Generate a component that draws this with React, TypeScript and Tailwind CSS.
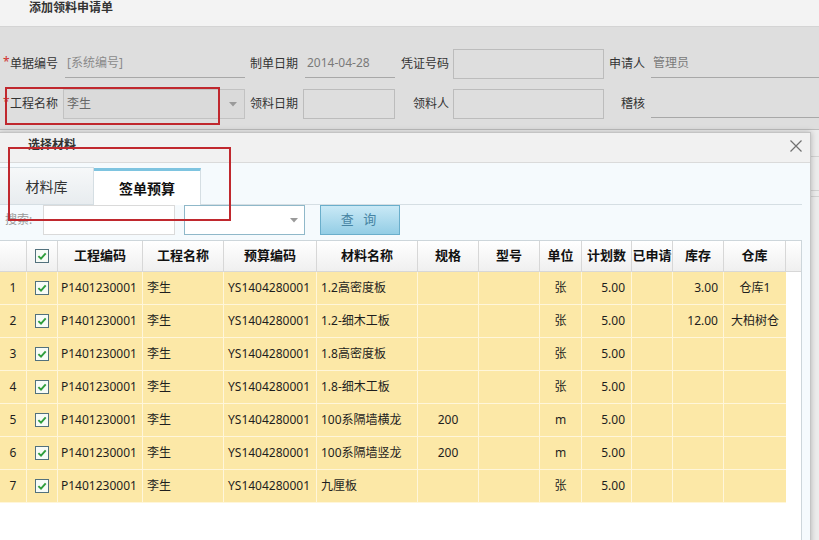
import React from "react";

type Row = { name: string; spec: string; unit: string; stock: string; wh: string };

const rows: Row[] = [
  { name: "1.2高密度板", spec: "", unit: "张", stock: "3.00", wh: "仓库1" },
  { name: "1.2-细木工板", spec: "", unit: "张", stock: "12.00", wh: "大柏树仓" },
  { name: "1.8高密度板", spec: "", unit: "张", stock: "", wh: "" },
  { name: "1.8-细木工板", spec: "", unit: "张", stock: "", wh: "" },
  { name: "100系隔墙横龙", spec: "200", unit: "m", stock: "", wh: "" },
  { name: "100系隔墙竖龙", spec: "200", unit: "m", stock: "", wh: "" },
  { name: "九厘板", spec: "", unit: "张", stock: "", wh: "" },
];

const cols =
  "grid grid-cols-[27px_31px_85px_81px_93px_101px_61px_61px_42px_50px_41px_51px_62px_15px]";

function Caret() {
  return (
    <svg width="8" height="5" viewBox="0 0 8 5">
      <path d="M0 0h8L4 4.5z" fill="#9a9a9a" />
    </svg>
  );
}

function CheckBox() {
  return (
    <svg width="14" height="14" viewBox="0 0 14 14">
      <rect x="0.5" y="0.5" width="13" height="13" fill="#f7fbf7" stroke="#52717d" />
      <path d="M3.4 7.1 6 9.7 10.7 4.3" fill="none" stroke="#2f9e3c" strokeWidth="1.9" />
    </svg>
  );
}

function Label({ className, star, children }: { className: string; star?: boolean; children: React.ReactNode }) {
  return (
    <div className={`flex items-center ${star ? "justify-between" : "justify-end"} ${className}`}>
      {star && <span className="pl-[3px] -mt-[4px] text-[12px] text-[#d0312d]">*</span>}
      <span>{children}</span>
    </div>
  );
}

export default function App() {
  return (
    <div className="relative w-[819px] h-[540px] overflow-hidden bg-[#ececec] font-['Noto_Sans','Noto_Sans_CJK_SC',sans-serif] text-[12px] text-[#333]">
      {/* page header */}
      <div className="h-[27px] bg-[#f3f3f3] border-b border-[#d4d4d4] pl-[29px] leading-[16px] font-bold text-[#333]">
        添加领料申请单
      </div>

      {/* form */}
      <div className="h-[103px] bg-[#dedede] border-b border-[#bdbdbd] pt-[22px] flex flex-col gap-[10px]">
        <div className="flex h-[30px]">
          <Label className="w-[58px]" star>单据编号</Label>
          <div className="ml-[7px] w-[180px] h-[29px] border-b border-[#a8a8a8] pl-[2px] pb-[1px] flex items-center text-[#8a8a8a]">
            [系统编号]
          </div>
          <Label className="w-[53px]">制单日期</Label>
          <div className="ml-[7px] w-[90px] h-[29px] border-b border-[#a8a8a8] pl-[2px] pb-[1px] flex items-center text-[#7a7a7a]">
            2014-04-28
          </div>
          <Label className="w-[54px]">凭证号码</Label>
          <div className="ml-[4px] w-[151px] border border-[#bcbcbc]" />
          <Label className="w-[41px]">申请人</Label>
          <div className="ml-[6px] flex-1 h-[29px] border-b border-[#a8a8a8] pl-[2px] pb-[1px] flex items-center text-[#7a7a7a]">
            管理员
          </div>
        </div>
        <div className="flex h-[30px]">
          <Label className="w-[58px]" star>工程名称</Label>
          <div className="ml-[5px] w-[182px] border border-[#c2c2c2] bg-[#dadada] pl-[3px] pr-[7px] flex items-center justify-between text-[#666]">
            <span>李生</span>
            <Caret />
          </div>
          <Label className="w-[53px]">领料日期</Label>
          <div className="ml-[5px] w-[92px] border border-[#bcbcbc]" />
          <Label className="w-[54px]">领料人</Label>
          <div className="ml-[4px] w-[151px] border border-[#bcbcbc]" />
          <Label className="w-[41px]">稽核</Label>
          <div className="ml-[6px] flex-1 h-[29px] border-b border-[#a8a8a8]" />
        </div>
      </div>

      {/* page lines behind the dialog */}
      <div className="h-[27px] border-b border-[#d2d2d2]" />
      <div className="h-[34px] border-b border-[#d2d2d2]" />
      <div className="h-[6px] border-b border-[#d2d2d2]" />

      {/* dialog */}
      <div className="absolute left-[-1px] top-[132px] w-[812px] h-[420px] border border-[#c4c4c4] bg-white shadow-[0_0_6px_rgba(0,0,0,0.25)] flex flex-col">
        <div className="h-[30px] shrink-0 bg-[#f1f1f1] border-b border-[#dadada] pl-[28px] pr-[8px] pb-[5px] flex items-center justify-between">
          <span className="font-bold text-[#333]">选择材料</span>
          <svg width="12" height="12" viewBox="0 0 12 12" className="mt-[2px]">
            <path d="M0.5 0.5 11.5 11.5M11.5 0.5 0.5 11.5" stroke="#707070" strokeWidth="1.2" />
          </svg>
        </div>

        <div className="flex-1 bg-[#f5fafd] pt-[5px] pr-[8px] flex flex-col">
          {/* tabs */}
          <div className="h-[37px] shrink-0 flex items-end border-b border-[#d5dee3] text-[14px]">
            <div className="w-[94px] h-[37px] bg-linear-to-b from-[#f6f8f9] to-[#e8ecef] border-t border-r border-[#d5dee3] flex items-center justify-center text-[#333]">
              材料库
            </div>
            <div className="w-[107px] h-[37px] -mb-px bg-white border-t-[3px] border-t-[#7ec4e0] border-r border-[#d5dee3] flex items-center justify-center font-bold text-[#111]">
              签单预算
            </div>
          </div>

          {/* search */}
          <div className="h-[30px] shrink-0 flex">
            <span className="w-[43px] pl-[5px] flex items-center text-[#9a9a9a]">搜索:</span>
            <div className="w-[132px] bg-white border border-[#dadada]" />
            <div className="ml-[9px] w-[121px] bg-white border border-[#8fb8c9] pr-[6px] flex items-center justify-end">
              <Caret />
            </div>
            <button className="ml-[15px] w-[80px] bg-linear-to-b from-[#c9e9f6] to-[#93cde5] border border-[#6aaecb] text-[13px] text-[#4784a3] tracking-[3px]">
              查 询
            </button>
          </div>

          {/* grid */}
          <div className="mt-[5px] flex-1 bg-white border-t border-r border-[#cdd6db]">
            <div className={`${cols} h-[31px] bg-linear-to-b from-[#ffffff] to-[#efefef] font-bold text-[13px] text-[#111]`}>
              {["", "check", "工程编码", "工程名称", "预算编码", "材料名称", "规格", "型号", "单位", "计划数", "已申请", "库存", "仓库", ""].map((h, i) => (
                <div
                  key={i}
                  className={`flex items-center justify-center border-b border-[#d7d7d7] ${i < 13 ? "border-r" : ""} whitespace-nowrap`}
                >
                  {h === "check" ? <CheckBox /> : h}
                </div>
              ))}
            </div>
            {rows.map((r, i) => (
              <div key={i} className={`${cols} h-[33px] text-[#1e1e1e]`}>
                <div className="bg-[#fce8a7] border-r border-b border-[#fff6da] flex items-center justify-center">{i + 1}</div>
                <div className="bg-[#fce8a7] border-r border-b border-[#fff6da] flex items-center justify-center">
                  <CheckBox />
                </div>
                <div className="bg-[#fce8a7] border-r border-b border-[#fff6da] flex items-center pl-[3px]">P1401230001</div>
                <div className="bg-[#fce8a7] border-r border-b border-[#fff6da] flex items-center pl-[4px]">李生</div>
                <div className="bg-[#fce8a7] border-r border-b border-[#fff6da] flex items-center pl-[4px]">YS1404280001</div>
                <div className="bg-[#fce8a7] border-r border-b border-[#fff6da] flex items-center pl-[4px] whitespace-nowrap overflow-hidden">{r.name}</div>
                <div className="bg-[#fce8a7] border-r border-b border-[#fff6da] flex items-center justify-center">{r.spec}</div>
                <div className="bg-[#fce8a7] border-r border-b border-[#fff6da]" />
                <div className="bg-[#fce8a7] border-r border-b border-[#fff6da] flex items-center justify-center">{r.unit}</div>
                <div className="bg-[#fce8a7] border-r border-b border-[#fff6da] flex items-center justify-end pr-[6px]">5.00</div>
                <div className="bg-[#fce8a7] border-r border-b border-[#fff6da]" />
                <div className="bg-[#fce8a7] border-r border-b border-[#fff6da] flex items-center justify-end pr-[5px]">{r.stock}</div>
                <div className="bg-[#fce8a7] border-b border-[#fff6da] flex items-center justify-center whitespace-nowrap">{r.wh}</div>
                <div />
              </div>
            ))}
          </div>
        </div>
      </div>

      {/* annotation boxes */}
      <div className="absolute left-[5px] top-[87px] w-[215px] h-[38px] border-2 border-[#c0282e]" />
      <div className="absolute left-[8px] top-[147px] w-[223px] h-[74px] border-2 border-[#c0282e]" />
    </div>
  );
}
